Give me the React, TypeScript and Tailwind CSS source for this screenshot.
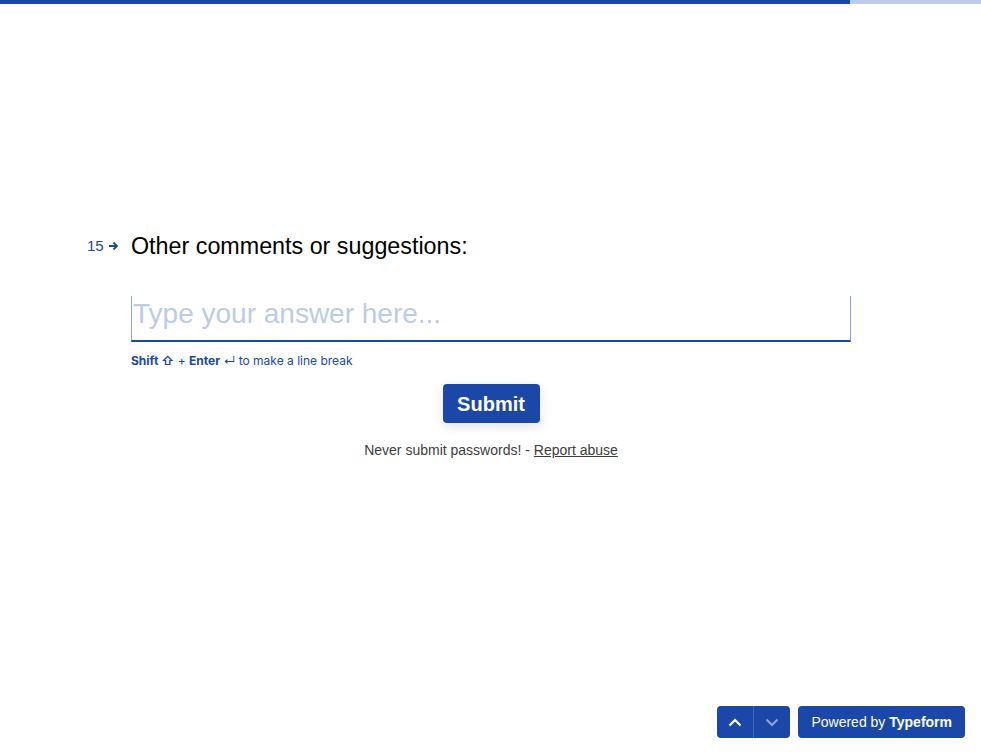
import React from "react";

export default function App() {
  return (
    <div className="relative w-[981px] h-[754px] bg-white overflow-hidden" style={{ fontFamily: "'Liberation Sans', Arial, sans-serif" }}>
      <div className="flex h-[4px] w-full">
        <div className="w-[850px] bg-[#1a47a8]" />
        <div className="flex-1 bg-[#bccbe8]" />
      </div>
      <div className="flex flex-col pl-[131px] pr-[131px] pt-[225px]">
        <div className="relative flex items-start">
          <div className="absolute left-[-44px] top-[7px] flex items-center gap-[4px] text-[#1a47a8] text-[15px] leading-[20px]">
            <span>15</span>
            <svg width="11" height="10" viewBox="0 0 11 10" fill="none">
              <path d="M1 5h8M5.5 1.5L9 5l-3.5 3.5" stroke="#1a47a8" strokeWidth="1.8" />
            </svg>
          </div>
          <h1 className="text-[23.3px] leading-[34px] text-black font-normal">Other comments or suggestions:</h1>
        </div>
        <div className="mt-[33px] w-[720px] h-[46px] border-l border-r border-[#8aa3d9] border-b-2 border-b-[#1a47a8] flex items-end pb-[8px]">
          <span className="text-[28px] leading-[36px] text-[#bccbe8] pl-[1px]">Type your answer here...</span>
        </div>
        <div className="mt-[11px] text-[12px] leading-[16px] text-[#1a47a8]" style={{ fontFamily: "Inter, 'Liberation Sans', sans-serif" }}>
          <span className="font-bold">Shift ⇧</span> + <span className="font-bold">Enter</span> ↵ to make a line break
        </div>
        <div className="w-[720px] flex flex-col items-center">
          <button className="mt-[15px] w-[97px] h-[39px] rounded-[4px] bg-[#1a47a8] text-white text-[20px] font-bold shadow-[0_3px_12px_rgba(0,0,0,0.12)]">Submit</button>
          <div className="mt-[18px] text-[14px] leading-[18px] text-[#3d3d3d]">
            Never submit passwords! - <span className="underline">Report abuse</span>
          </div>
        </div>
      </div>
      <div className="absolute right-[16px] bottom-[16px] flex gap-[8px]">
        <div className="flex h-[32px] rounded-[4px] overflow-hidden bg-[#1a47a8]">
          <div className="w-[36px] flex items-center justify-center">
            <svg width="14" height="9" viewBox="0 0 14 9" fill="none"><path d="M1.5 7.5L7 2l5.5 5.5" stroke="white" strokeWidth="2.2" /></svg>
          </div>
          <div className="w-[1px] bg-[#3f66bd]" />
          <div className="w-[36px] flex items-center justify-center">
            <svg width="14" height="9" viewBox="0 0 14 9" fill="none"><path d="M1.5 1.5L7 7l5.5-5.5" stroke="#8ea6db" strokeWidth="2" /></svg>
          </div>
        </div>
        <div className="h-[32px] px-[13px] rounded-[4px] bg-[#1a47a8] text-white text-[14px] flex items-center">
          Powered by&nbsp;<span className="font-bold">Typeform</span>
        </div>
      </div>
    </div>
  );
}
